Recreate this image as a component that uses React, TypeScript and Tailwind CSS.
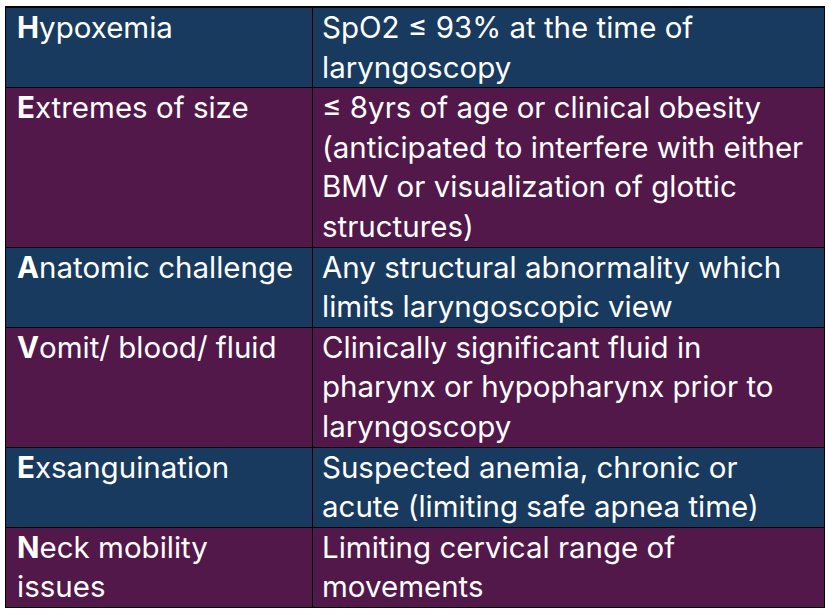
import React from "react";

type Row = { k: string; rest: string[]; v: string[]; blue: boolean };

const rows: Row[] = [
  { k: "H", rest: ["ypoxemia"], v: ["SpO2 \u2264 93% at the time of", "laryngoscopy"], blue: true },
  {
    k: "E",
    rest: ["xtremes of size"],
    v: [
      "\u2264 8yrs of age or clinical obesity",
      "(anticipated to interfere with either",
      "BMV or visualization of glottic",
      "structures)",
    ],
    blue: false,
  },
  {
    k: "A",
    rest: ["natomic challenge"],
    v: ["Any structural abnormality which", "limits laryngoscopic view"],
    blue: true,
  },
  {
    k: "V",
    rest: ["omit/ blood/ fluid"],
    v: ["Clinically significant fluid in", "pharynx or hypopharynx prior to", "laryngoscopy"],
    blue: false,
  },
  {
    k: "E",
    rest: ["xsanguination"],
    v: ["Suspected anemia, chronic or", "acute (limiting safe apnea time)"],
    blue: true,
  },
  {
    k: "N",
    rest: ["eck mobility", "issues"],
    v: ["Limiting cervical range of", "movements"],
    blue: false,
  },
];

export default function App() {
  return (
    <div className="w-[829px] h-[615px] bg-white pt-[6px] pl-[5px]">
      <div
        className="w-[820px] border border-t-2 border-black text-white text-[29.5px] leading-[39.6px] whitespace-nowrap"
        style={{ fontFamily: "Inter, 'Open Sans', sans-serif" }}
      >
        {rows.map((r, i) => (
          <div
            key={i}
            className={`grid grid-cols-[307px_1fr] ${r.blue ? "bg-[#183a5f]" : "bg-[#52184a]"} ${
              i > 0 ? "border-t border-black" : ""
            }`}
          >
            <div className="pl-[11px] border-r border-black overflow-hidden">
              {r.rest.map((t, j) => (
                <div key={j}>
                  {j === 0 && <span className="font-bold">{r.k}</span>}
                  {t}
                </div>
              ))}
            </div>
            <div className="pl-[9px] overflow-hidden">
              {r.v.map((t, j) => (
                <div key={j}>{t}</div>
              ))}
            </div>
          </div>
        ))}
      </div>
    </div>
  );
}
